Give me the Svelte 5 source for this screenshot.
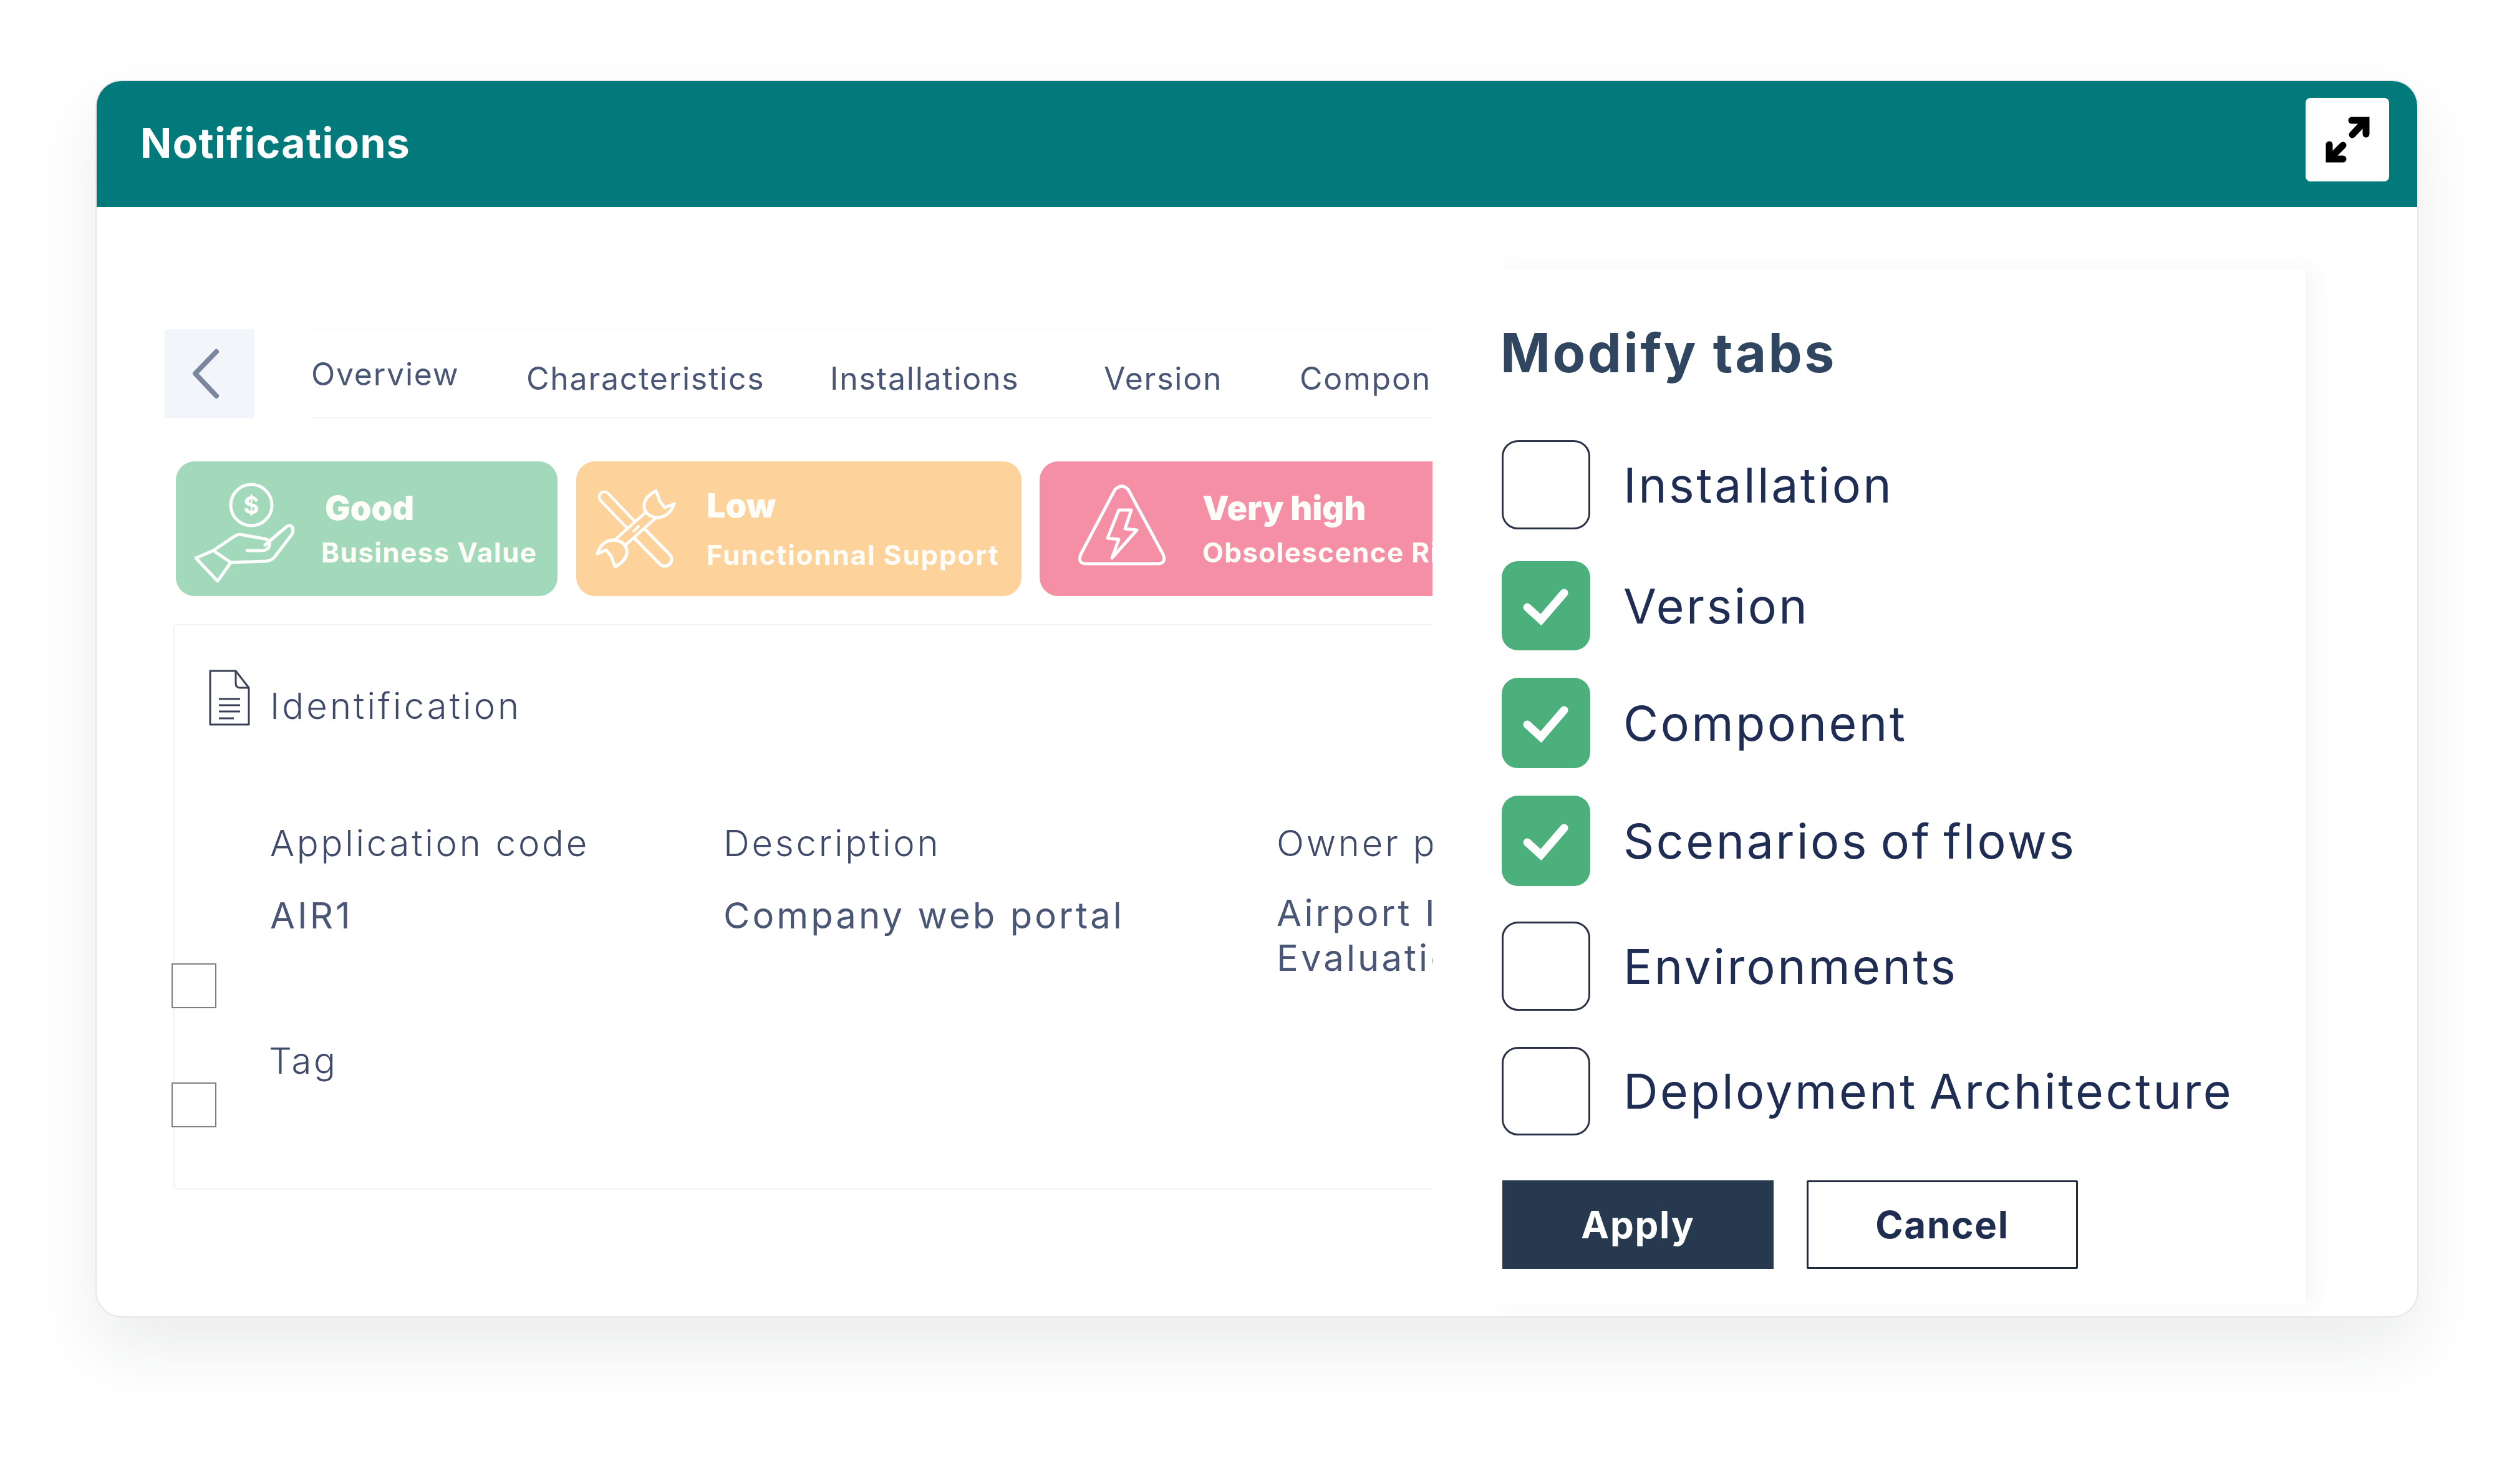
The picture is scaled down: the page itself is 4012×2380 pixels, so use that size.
<script>
	const tabs = ['Overview', 'Characteristics', 'Installations', 'Version', 'Component'];

	// gap is the space above the row, the rows aren't evenly spaced in the design
	const options = [
		{ label: 'Installation', checked: false, gap: 0, height: 143 },
		{ label: 'Version', checked: true, gap: 51, height: 143 },
		{ label: 'Component', checked: true, gap: 44, height: 145 },
		{ label: 'Scenarios of flows', checked: true, gap: 44, height: 145 },
		{ label: 'Environments', checked: false, gap: 57, height: 143 },
		{ label: 'Deployment Architecture', checked: false, gap: 58, height: 142 }
	];
</script>

<div class="page">
	<div class="card">
		<header class="card-head">
			<h1>Notifications</h1>
			<button class="expand" aria-label="Expand">
				<svg viewBox="0 0 134 134" width="134" height="134" fill="none" stroke="#000" stroke-width="11" stroke-linecap="round">
					<path d="M74 36H97V58" />
					<path d="M75 59L92 41" />
					<path d="M38 75V98H60" />
					<path d="M60 76L43 93" />
				</svg>
			</button>
		</header>

		<div class="card-body">
			<section class="details">
				<nav class="tabs">
					<button class="back" aria-label="Back">
						<svg viewBox="0 0 60 90" width="60" height="90" fill="none" stroke="#7b879e" stroke-width="8" stroke-linecap="round" stroke-linejoin="round">
							<path d="M41 9L7 44L41 80" />
						</svg>
					</button>
					<div class="tab-list">
						{#each tabs as tab, i}
							<span class="tab" class:raised={i === 0}>{tab}</span>
						{/each}
					</div>
				</nav>

				<div class="pills">
					<div class="pill green">
						<svg class="pill-icon" viewBox="0 0 160 160" width="160" height="160" fill="none" stroke="#fff" stroke-width="5" stroke-linejoin="round" stroke-linecap="round">
							<circle cx="91" cy="36" r="33" />
							<text x="91" y="50" text-anchor="middle" fill="#fff" stroke="none" font-size="38" font-weight="700" font-family="Inter, sans-serif">$</text>
							<path d="M2 121L30 109L58 128L37 158Z" />
							<path d="M30 109L64 86Q70 82 78 84L112 90Q122 92 120 101Q118 109 108 109H84" />
							<path d="M113 100L147 71Q153 66 157 72Q159 77 156 83L130 117Q125 125 115 126L58 128" />
						</svg>
						<div class="pill-text">
							<strong>Good</strong>
							<span>Business Value</span>
						</div>
					</div>

					<div class="pill orange">
						<svg class="pill-icon" viewBox="0 0 128 128" width="128" height="128" fill="none" stroke-linecap="round" stroke-linejoin="round">
							<path d="M13 13L60 62" stroke="#fff" stroke-width="21" />
							<path d="M60 62L110 113" stroke="#fff" stroke-width="27" />
							<path d="M13 13L60 62" stroke="#fdd29b" stroke-width="12" />
							<path d="M60 62L110 113" stroke="#fdd29b" stroke-width="17" />
							<path d="M92 38L34 90" stroke="#fff" stroke-width="22" />
							<path d="M92 38L34 90" stroke="#fdd29b" stroke-width="13" />
							<path d="M60 68L68 60" stroke="#fff" stroke-width="4" />
							<path d="M96 3Q72 16 78 34Q84 46 100 46Q118 44 125 24L110 30L102 20Z" stroke="#fff" stroke-width="5" fill="#fdd29b" />
							<path d="M30 125Q54 112 48 94Q42 82 26 82Q8 84 2 104L16 98L24 108Z" stroke="#fff" stroke-width="5" fill="#fdd29b" />
						</svg>
						<div class="pill-text">
							<strong>Low</strong>
							<span>Functionnal Support</span>
						</div>
					</div>

					<div class="pill pink">
						<svg class="pill-icon" viewBox="0 0 142 130" width="142" height="130" fill="none" stroke="#fff" stroke-width="5" stroke-linejoin="round">
							<path d="M60 8Q71 -2 81 8L137 112Q143 127 128 127H14Q-1 127 5 112Z" />
							<path d="M66 41H86L76 71L95 73L55 118L66 88L48 86Z" />
						</svg>
						<div class="pill-text">
							<strong>Very high</strong>
							<span>Obsolescence Risk</span>
						</div>
					</div>
				</div>

				<div class="panel">
					<span class="box" style="top: 542px"></span>
					<span class="box" style="top: 733px"></span>

					<div class="panel-title">
						<svg viewBox="0 0 66 90" width="66" height="90" fill="none" stroke="#3c4256" stroke-width="3" stroke-linejoin="round">
							<path d="M2 2H43L64 29V88H2Z" />
							<path d="M43 2V22Q43 29 50 29H64" />
							<path d="M16 47H50M16 57H50M16 67H50M16 78H40" stroke-width="3" />
						</svg>
						<h2>Identification</h2>
					</div>

					<div class="fields">
						<div>
							<div class="label">Application code</div>
							<div class="value">AIR1</div>
						</div>
						<div>
							<div class="label">Description</div>
							<div class="value">Company web portal</div>
						</div>
						<div>
							<div class="label">Owner process</div>
							<div class="value multi">Airport Information<br />Evaluation</div>
						</div>
					</div>

					<div class="label tag">Tag</div>
				</div>
			</section>

			<aside class="modify">
				<h2>Modify tabs</h2>
				{#each options as opt}
					<label class="option" style="margin-top: {opt.gap}px; height: {opt.height}px">
						<span class="check" class:checked={opt.checked}>
							{#if opt.checked}
								<svg viewBox="0 0 142 143" width="142" height="143" fill="none" stroke="#fff" stroke-width="13" stroke-linecap="round" stroke-linejoin="miter">
									<path d="M41 74L63 94L100 51" />
								</svg>
							{/if}
						</span>
						<span class="option-label">{opt.label}</span>
					</label>
				{/each}
				<div class="actions">
					<button class="apply">Apply</button>
					<button class="cancel">Cancel</button>
				</div>
			</aside>
		</div>
	</div>
</div>

<style>
	:global(body) {
		margin: 0;
		background: #fff;
	}

	.page {
		width: 4012px;
		height: 2380px;
		padding: 130px 0 0 155px;
		box-sizing: border-box;
		overflow: hidden;
		font-family: Inter, 'Liberation Sans', sans-serif;
	}

	.card {
		width: 3721px;
		height: 1981px;
		border-radius: 40px;
		background: #fff;
		box-shadow: 0 0 0 2px #e6e8e8, 0 50px 110px rgba(30, 40, 60, 0.09);
	}

	.card-head {
		height: 202px;
		box-sizing: border-box;
		padding: 27px 45px 0 70px;
		display: flex;
		justify-content: space-between;
		align-items: flex-start;
		background: #027a7c;
		border-radius: 40px 40px 0 0;
	}

	.card-head h1 {
		margin: 27px 0 0;
		font-size: 66px;
		line-height: 90px;
		font-weight: 700;
		letter-spacing: 0.02em;
		color: #fff;
	}

	.expand {
		width: 134px;
		height: 134px;
		padding: 0;
		border: 0;
		border-radius: 8px;
		background: #fff;
	}

	.expand svg {
		display: block;
	}

	.card-body {
		height: 1779px;
		display: flex;
		align-items: flex-start;
	}

	.details {
		position: relative;
		z-index: 1;
		flex: none;
		width: 2033px;
		height: 1700px;
		box-sizing: border-box;
		margin-left: 109px;
		padding-top: 196px;
		overflow: hidden;
		background: #fff;
	}

	.tabs {
		display: flex;
		height: 143px;
	}

	.back {
		flex: none;
		width: 144px;
		height: 143px;
		padding: 0;
		border: 0;
		display: flex;
		align-items: center;
		justify-content: center;
		background: #f2f5fa;
	}

	.tab-list {
		flex: none;
		margin-left: 91px;
		display: grid;
		grid-template-columns: 345px 487px 439px 314px 300px;
		align-items: center;
		border-top: 2px solid #fafafa;
		border-bottom: 2px solid #f7f7f7;
		height: 139px;
	}

	.tab {
		font-size: 50px;
		letter-spacing: 0.035em;
		color: #4a5675;
		padding-top: 14px;
	}

	.tab.raised {
		padding-top: 0;
	}

	.pills {
		display: flex;
		margin: 69px 0 0 18px;
		height: 216px;
	}

	.pill {
		flex: none;
		height: 216px;
		box-sizing: border-box;
		display: flex;
		align-items: center;
		border-radius: 30px;
		color: #fffdf7;
	}

	.green {
		width: 612px;
		background: #a3d9bb;
		padding-left: 30px;
	}

	.orange {
		width: 714px;
		margin-left: 30px;
		background: #fdd29b;
		padding-left: 32px;
	}

	.pink {
		width: 760px;
		margin-left: 29px;
		background: #f48fa5;
		padding-left: 61px;
	}

	.pill-icon {
		flex: none;
		display: block;
	}

	.green .pill-icon {
		margin-top: 12px;
	}

	.pink .pill-icon {
		margin-bottom: 12px;
	}

	.pill-text {
		display: flex;
		flex-direction: column;
		white-space: nowrap;
		font-weight: 700;
	}

	.pill-text strong {
		font-size: 54px;
		line-height: 60px;
	}

	.pill-text span {
		font-size: 44px;
		line-height: 50px;
		margin-top: 16px;
		letter-spacing: 0.03em;
	}

	.green .pill-text {
		margin-left: 43px;
	}

	.green .pill-text strong {
		margin-left: 6px;
	}

	.orange .pill-text {
		margin-left: 49px;
	}

	.orange .pill-text span {
		margin-top: 24px;
		letter-spacing: 0.04em;
	}

	.pink .pill-text {
		margin-left: 58px;
	}

	.panel {
		position: relative;
		width: 2100px;
		height: 907px;
		box-sizing: border-box;
		margin: 45px 0 0 14px;
		border: 2px solid #f1f2f2;
		border-right: 0;
		border-radius: 6px 0 0 6px;
	}

	.box {
		position: absolute;
		left: -5px;
		width: 72px;
		height: 72px;
		box-sizing: border-box;
		border: 2px solid #7c7f85;
		background: #fff;
	}

	.panel-title {
		display: flex;
		align-items: flex-end;
		margin: 71px 0 0 55px;
	}

	.panel-title svg {
		flex: none;
		display: block;
	}

	.panel-title h2 {
		margin: 0 0 2px 32px;
		font-size: 58px;
		line-height: 60px;
		font-weight: 300;
		letter-spacing: 0.07em;
		color: #3f4a6b;
	}

	.fields {
		display: grid;
		grid-template-columns: 727px 887px 400px;
		margin: 158px 0 0 153px;
	}

	.label {
		font-size: 58px;
		line-height: 60px;
		font-weight: 300;
		letter-spacing: 0.065em;
		color: #3f4a6b;
		white-space: nowrap;
	}

	.value {
		margin-top: 56px;
		font-size: 58px;
		line-height: 60px;
		letter-spacing: 0.07em;
		color: #4a5675;
		white-space: nowrap;
	}

	.value.multi {
		margin-top: 46px;
		line-height: 72px;
	}

	.tag {
		margin: 99px 0 0 151px;
	}

	.modify {
		flex: none;
		width: 1300px;
		height: 1660px;
		box-sizing: border-box;
		margin: 100px 0 0 100px;
		padding: 84px 0 0 9px;
		background: #fff;
		box-shadow: 14px 0 30px rgba(40, 50, 70, 0.05);
	}

	.modify h2 {
		margin: 0 0 90px;
		font-size: 86px;
		line-height: 100px;
		font-weight: 700;
		letter-spacing: 0.04em;
		color: #2f4560;
	}

	.option {
		display: flex;
		align-items: center;
	}

	.check {
		flex: none;
		width: 142px;
		height: 100%;
		box-sizing: border-box;
		margin-left: 2px;
		border: 3px solid #2b3147;
		border-radius: 26px;
	}

	.check.checked {
		border: 0;
		background: #4cb07d;
	}

	.check svg {
		display: block;
		height: 100%;
	}

	.option-label {
		margin-left: 53px;
		font-size: 77px;
		letter-spacing: 0.045em;
		word-spacing: -0.08em;
		color: #1f2d55;
		white-space: nowrap;
	}

	.actions {
		display: flex;
		gap: 53px;
		margin: 72px 0 0 3px;
	}

	.actions button {
		width: 435px;
		height: 142px;
		box-sizing: border-box;
		font-family: inherit;
		font-size: 60px;
		font-weight: 700;
		letter-spacing: 0.03em;
	}

	.apply {
		border: 0;
		background: #26394f;
		color: #fff;
	}

	.cancel {
		border: 3px solid #1f2a3d;
		border-radius: 2px;
		background: #fff;
		color: #1f2d50;
	}
</style>
